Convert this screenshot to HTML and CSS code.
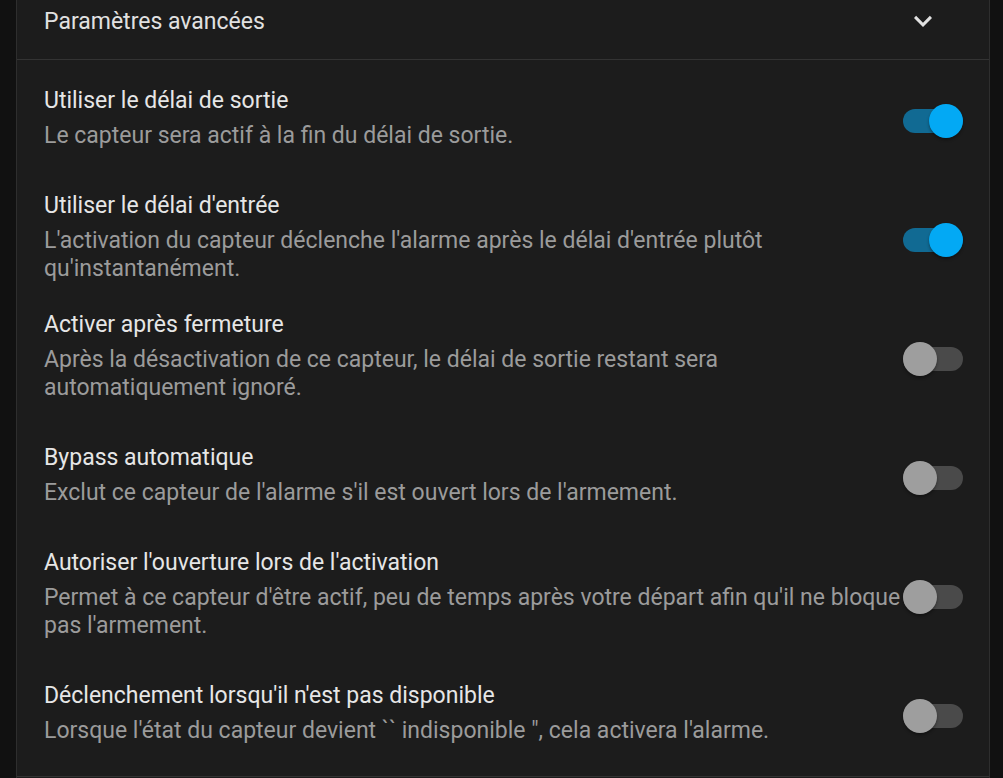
FILE: index.html
```html
<!DOCTYPE html>
<html lang="fr">
<head>
<meta charset="utf-8">
<link rel="stylesheet" href="styles.css">
</head>
<body>
<div class="card">
  <div class="header">
    <span class="header-title">Paramètres avancées</span>
    <svg class="chevron" width="24" height="24" viewBox="0 0 24 24"><path d="M7.41 8.58L12 13.17l4.59-4.59L18 10l-6 6-6-6 1.41-1.42z" fill="#e1e1e1"/></svg>
  </div>
  <div class="rows">
    <div class="row">
      <div class="text">
        <div class="title">Utiliser le délai de sortie</div>
        <div class="desc">Le capteur sera actif à la fin du délai de sortie.</div>
      </div>
      <div class="switch on"><span class="track"></span><span class="thumb"></span></div>
    </div>
    <div class="row tight">
      <div class="text">
        <div class="title">Utiliser le délai d'entrée</div>
        <div class="desc">L'activation du capteur déclenche l'alarme après le délai d'entrée plutôt qu'instantanément.</div>
      </div>
      <div class="switch on"><span class="track"></span><span class="thumb"></span></div>
    </div>
    <div class="row">
      <div class="text">
        <div class="title">Activer après fermeture</div>
        <div class="desc">Après la désactivation de ce capteur, le délai de sortie restant sera automatiquement ignoré.</div>
      </div>
      <div class="switch"><span class="track"></span><span class="thumb"></span></div>
    </div>
    <div class="row">
      <div class="text">
        <div class="title">Bypass automatique</div>
        <div class="desc">Exclut ce capteur de l'alarme s'il est ouvert lors de l'armement.</div>
      </div>
      <div class="switch"><span class="track"></span><span class="thumb"></span></div>
    </div>
    <div class="row">
      <div class="text">
        <div class="title">Autoriser l'ouverture lors de l'activation</div>
        <div class="desc">Permet à ce capteur d'être actif, peu de temps après votre départ afin qu'il ne bloque pas l'armement.</div>
      </div>
      <div class="switch"><span class="track"></span><span class="thumb"></span></div>
    </div>
    <div class="row">
      <div class="text">
        <div class="title">Déclenchement lorsqu'il n'est pas disponible</div>
        <div class="desc">Lorsque l'état du capteur devient `` indisponible ", cela activera l'alarme.</div>
      </div>
      <div class="switch"><span class="track"></span><span class="thumb"></span></div>
    </div>
  </div>
  <div class="footer"></div>
</div>
</body>
</html>
```
FILE: styles.css
```css
html, body {
  margin: 0;
  padding: 0;
  background: #111111;
  height: 100%;
  overflow: hidden;
}
body {
  font-family: Roboto, "Noto Sans", sans-serif;
  -webkit-font-smoothing: antialiased;
}
.card {
  margin-left: 16px;
  width: 972px;
  background: #1c1c1c;
  border-left: 1px solid #2e2e2e;
  border-right: 1px solid #2e2e2e;
  min-height: 800px;
}
.header {
  height: 60px;
  box-sizing: border-box;
  border-bottom: 1px solid #333333;
  display: flex;
  align-items: flex-start;
  justify-content: space-between;
  padding: 7px 48px 0 27px;
}
.header-title {
  color: #e1e1e1;
  font-size: 23px;
  line-height: 30px;
}
.chevron {
  width: 36px;
  height: 36px;
  margin-top: -4px;
}
.rows {
  padding: 6px 26px 10px 27px;
  border-bottom: 1px solid #333333;
}
.row {
  display: flex;
  align-items: center;
  padding: 21px 0;
}
.row.tight {
  padding-bottom: 7px;
}
.text {
  flex: 1;
  min-width: 0;
}
.title {
  color: #e6e6e6;
  font-size: 23px;
  line-height: 28px;
}
.desc {
  color: #9b9b9b;
  font-size: 23px;
  line-height: 28px;
  margin-top: 7px;
}
.switch {
  position: relative;
  width: 60px;
  height: 34px;
  flex: none;
  margin-top: 5px;
}
.track {
  position: absolute;
  left: 0;
  top: 5px;
  width: 60px;
  height: 24px;
  border-radius: 12px;
  background: #4a4a4a;
}
.thumb {
  position: absolute;
  left: 0;
  top: 0;
  width: 34px;
  height: 34px;
  border-radius: 50%;
  background: #9e9e9e;
  box-shadow: 0 2px 3px rgba(0,0,0,0.35);
}
.switch.on .track {
  background: #116a93;
}
.switch.on .thumb {
  left: 26px;
  background: #03a9f4;
}
```
